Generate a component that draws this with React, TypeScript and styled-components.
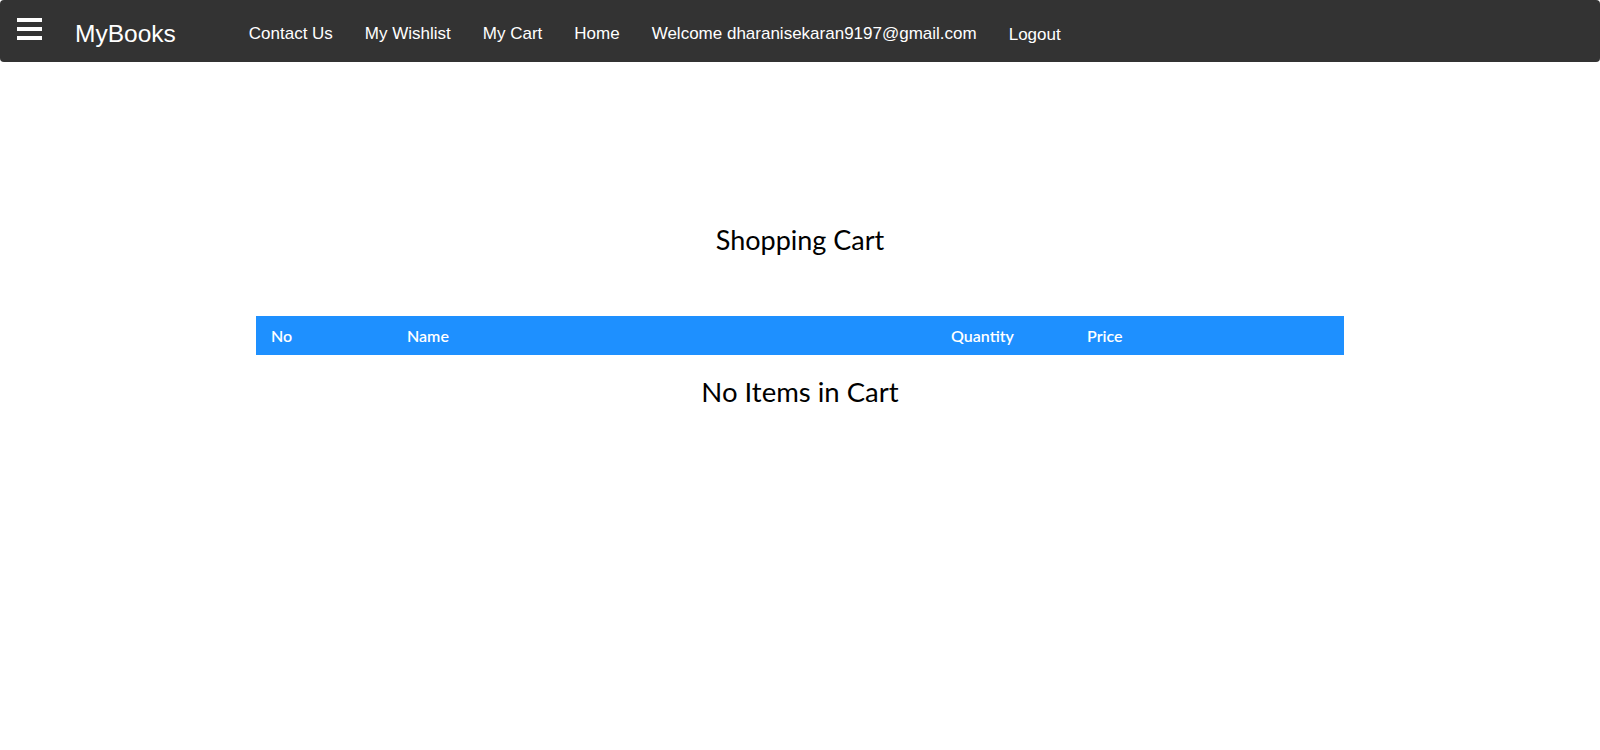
import React from "react";
import styled, { createGlobalStyle } from "styled-components";

const GlobalStyle = createGlobalStyle`
  html, body {
    margin: 0;
    padding: 0;
    background: #ffffff;
  }
  body {
    font-family: "Liberation Sans", Arial, sans-serif;
  }
  * { box-sizing: border-box; }
`;

const NavBar = styled.nav`
  display: flex;
  align-items: center;
  height: 62px;
  background: #333333;
  border-radius: 4px;
  padding: 0 0 0 17px;
  color: #ffffff;
`;

const MenuButton = styled.button`
  display: flex;
  align-items: center;
  justify-content: center;
  width: 25px;
  height: 22px;
  padding: 0;
  margin: 0 33px 4px 0;
  border: none;
  background: transparent;
  cursor: pointer;
`;

const Brand = styled.a`
  font-family: "Liberation Sans", Arial, sans-serif;
  font-size: 24.5px;
  color: #ffffff;
  text-decoration: none;
  margin-right: 73px;
  padding-top: 5px;
`;

const NavLinks = styled.ul`
  display: flex;
  align-items: center;
  gap: 32px;
  list-style: none;
  margin: 0;
  padding: 6px 0 0 0;
`;

const NavItem = styled.li<{ $offset?: number }>`
  font-family: "Liberation Sans", Arial, sans-serif;
  font-size: 17px;
  color: #ffffff;
  padding-top: ${(p) => p.$offset ?? 0}px;
  white-space: nowrap;
`;

const Main = styled.main`
  display: flex;
  flex-direction: column;
  align-items: center;
  padding-top: 162px;
  font-family: Lato, "Open Sans", sans-serif;
`;

const Title = styled.h2`
  margin: 0 0 60px 0;
  font-size: 27px;
  line-height: 32px;
  font-weight: 400;
  color: #000000;
`;

const CartTable = styled.table`
  width: 68%;
  border-collapse: collapse;
`;

const HeadRow = styled.tr`
  background: #1e90ff;
`;

const HeadCell = styled.th<{ $w: string }>`
  width: ${(p) => p.$w};
  height: 39px;
  padding: 0 15px;
  text-align: left;
  font-family: Lato, "Open Sans", sans-serif;
  font-size: 16px;
  line-height: 18px;
  font-weight: 600;
  color: #ffffff;
`;

const Empty = styled.p`
  margin: 21px 0 0 0;
  font-size: 27.5px;
  line-height: 32px;
  color: #000000;
`;

function Hamburger() {
  return (
    <svg width="25" height="22" viewBox="0 0 25 22" aria-hidden="true">
      <rect x="0" y="0" width="25" height="4" fill="#ffffff" />
      <rect x="0" y="9" width="25" height="4" fill="#ffffff" />
      <rect x="0" y="18" width="25" height="4" fill="#ffffff" />
    </svg>
  );
}

const links = ["Contact Us", "My Wishlist", "My Cart", "Home", "Welcome dharanisekaran9197@gmail.com"];

const columns: { label: string; w: string }[] = [
  { label: "No", w: "12.5%" },
  { label: "Name", w: "50%" },
  { label: "Quantity", w: "12.5%" },
  { label: "Price", w: "25%" },
];

export default function App() {
  return (
    <>
      <GlobalStyle />
      <NavBar>
        <MenuButton aria-label="menu">
          <Hamburger />
        </MenuButton>
        <Brand>MyBooks</Brand>
        <NavLinks>
          {links.map((l) => (
            <NavItem key={l}>{l}</NavItem>
          ))}
          <NavItem $offset={2}>Logout</NavItem>
        </NavLinks>
      </NavBar>
      <Main>
        <Title>Shopping Cart</Title>
        <CartTable>
          <thead>
            <HeadRow>
              {columns.map((c) => (
                <HeadCell key={c.label} $w={c.w}>
                  {c.label}
                </HeadCell>
              ))}
            </HeadRow>
          </thead>
        </CartTable>
        <Empty>No Items in Cart</Empty>
      </Main>
    </>
  );
}
